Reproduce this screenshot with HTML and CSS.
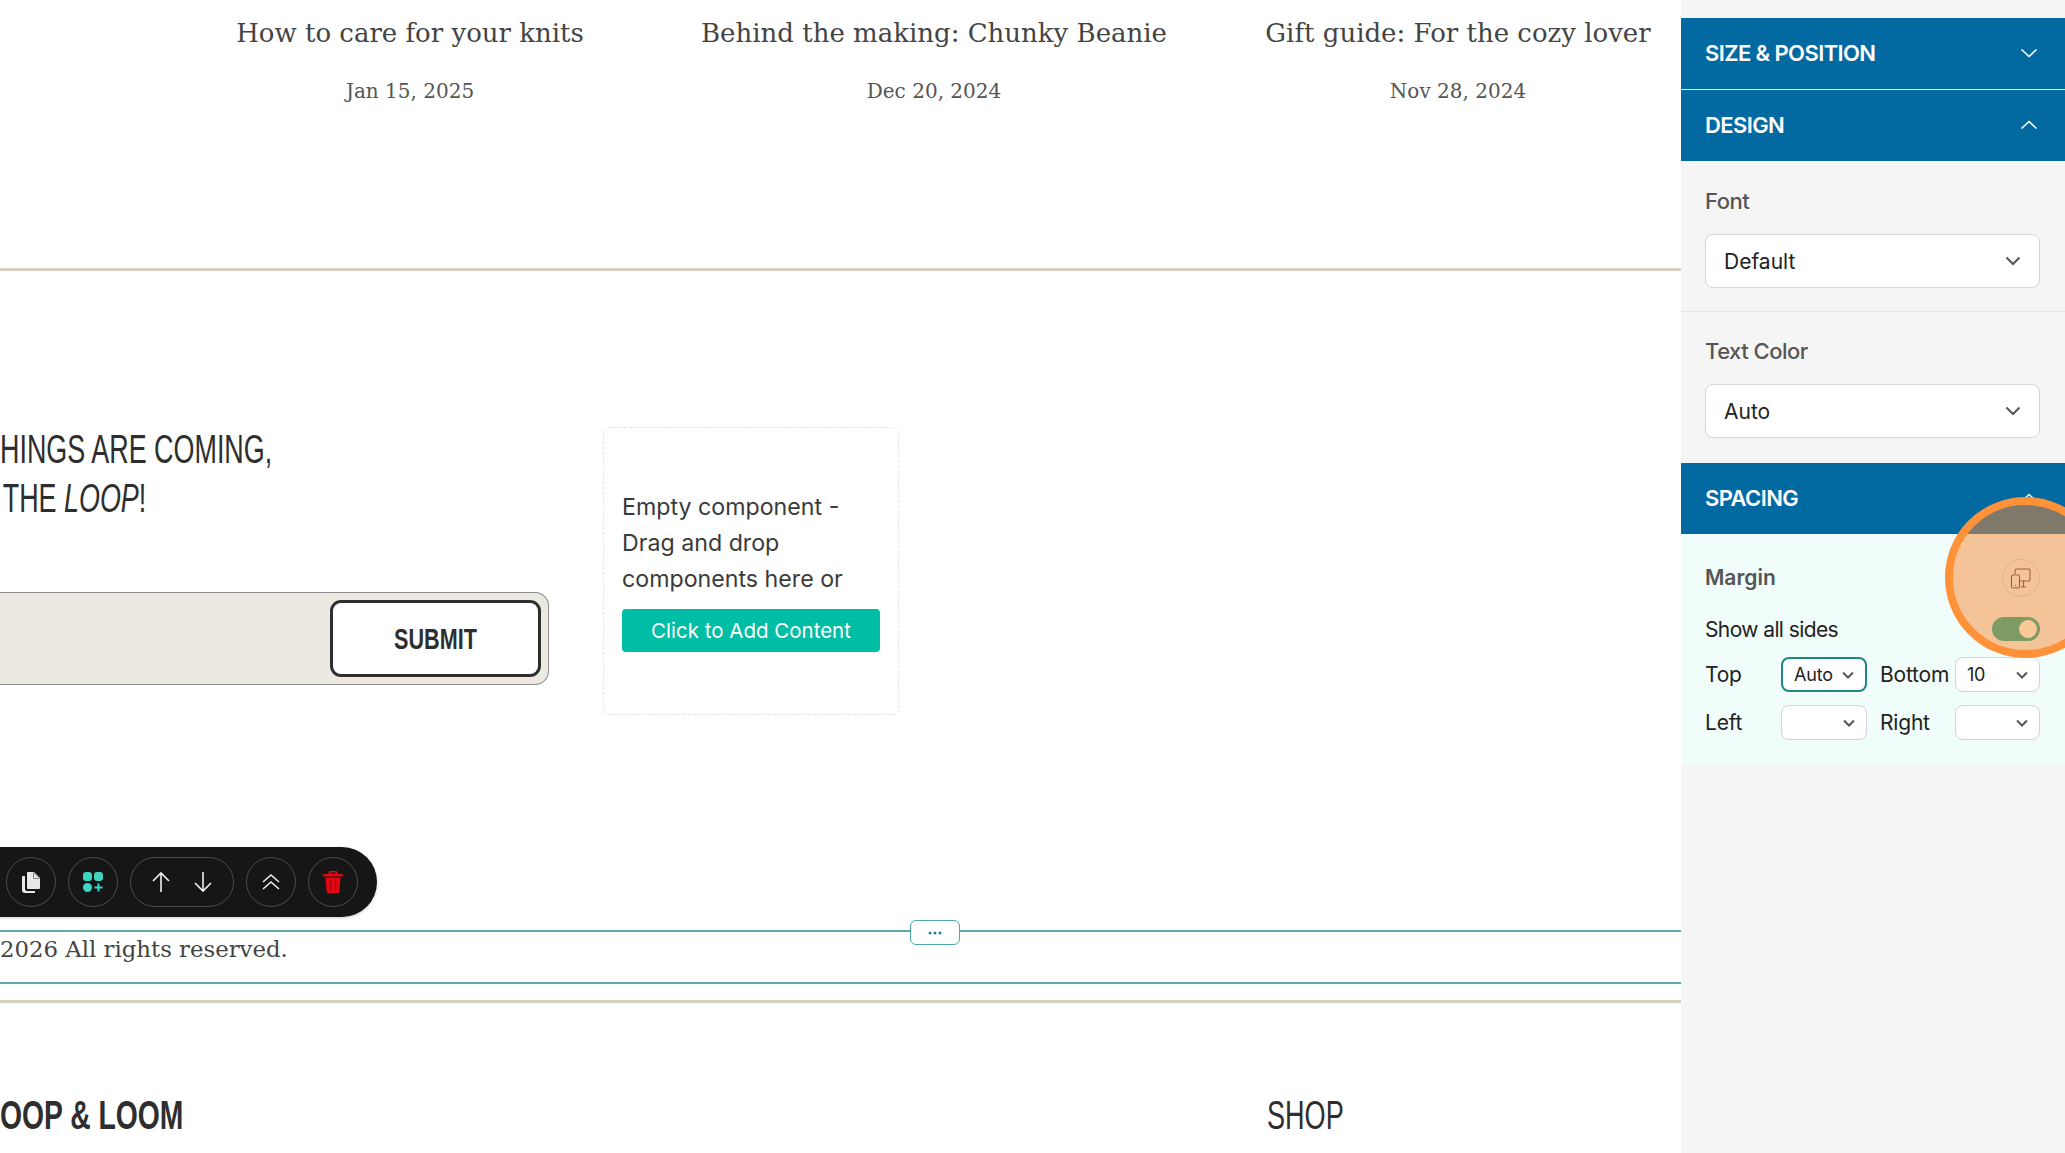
FILE: index.html
```html
<!DOCTYPE html>
<html lang="en">
<head>
<meta charset="utf-8">
<title>Page editor</title>
<link rel="stylesheet" href="styles.css">
</head>
<body>
<div class="app">
  <main class="canvas">
    <section class="posts">
      <article class="post"><h3>How to care for your knits</h3><p>Jan 15, 2025</p></article>
      <article class="post"><h3>Behind the making: Chunky Beanie</h3><p>Dec 20, 2024</p></article>
      <article class="post"><h3>Gift guide: For the cozy lover</h3><p>Nov 28, 2024</p></article>
    </section>
    <section class="signup">
      <div class="signup-main">
        <h2 class="signup-title">HINGS ARE COMING,<br><span class="indent">THE <em>LOOP</em>!</span></h2>
        <form class="signup-form"><button type="button" class="submit"><span>SUBMIT</span></button></form>
      </div>
      <div class="empty">
        <p>Empty component - Drag and drop components here or</p>
        <button type="button" class="add">Click to Add Content</button>
      </div>
    </section>
    <section class="legal">
      <div class="toolbar">
        <span class="tool"><svg width="24" height="24" viewBox="0 0 24 24"><path fill="#e8e8ea" d="M9 2h6l6 6v10a1 1 0 0 1-1 1H9a1 1 0 0 1-1-1V3a1 1 0 0 1 1-1z"/><path fill="#161616" d="M14.500 2.500v6h6z"/><path fill="#e8e8ea" d="M15 3l5 5h-5z"/><path fill="#e8e8ea" d="M6 6v13a2 2 0 0 0 2 2h8v2H6a3 3 0 0 1-3-3V7a1 1 0 0 1 1-1z"/></svg></span>
        <span class="tool"><svg width="22" height="22" viewBox="0 0 22 22"><rect x="1" y="1" width="9" height="9" rx="3.200" fill="#3dd6c3"/><rect x="12" y="1" width="9" height="9" rx="3.200" fill="#3dd6c3"/><rect x="1" y="12" width="9" height="9" rx="4.500" fill="#3dd6c3"/><path d="M16.500 12.500v8M12.500 16.500h8" stroke="#3dd6c3" stroke-width="2"/></svg></span>
        <span class="tool tool-pill">
          <svg width="20" height="22" viewBox="0 0 20 22"><path d="M10 21V2M2 10l8-8 8 8" fill="none" stroke="#f0f0f0" stroke-width="1.600"/></svg>
          <svg width="20" height="22" viewBox="0 0 20 22"><path d="M10 1v19M2 12l8 8 8-8" fill="none" stroke="#f0f0f0" stroke-width="1.600"/></svg>
        </span>
        <span class="tool"><svg width="20" height="20" viewBox="0 0 20 20"><path d="M2 10l8-7 8 7M2 17l8-7 8 7" fill="none" stroke="#f0f0f0" stroke-width="1.500"/></svg></span>
        <span class="tool"><svg width="20" height="24" viewBox="0 0 20 24"><path fill="#e30613" d="M7 1h6a1.500 1.500 0 0 1 1.500 1.500V4H19a1 1 0 0 1 0 2.500H1A1 1 0 0 1 1 4h4.500V2.500A1.500 1.500 0 0 1 7 1zm.5 1.500V4h5V2.500z"/><path fill="#e30613" d="M2.500 7.500h15l-1.100 14a2 2 0 0 1-2 1.800H5.600a2 2 0 0 1-2-1.800z"/><path stroke="#a80410" stroke-width="1.200" d="M7.500 10v10M12.500 10v10"/></svg></span>
      </div>
      <div class="legal-row">
        <button type="button" class="handle" aria-label="More">
          <svg width="14" height="4" viewBox="0 0 14 4"><circle cx="2" cy="2" r="1.500"/><circle cx="7" cy="2" r="1.500"/><circle cx="12" cy="2" r="1.500"/></svg>
        </button>
        <p class="copyright">2026 All rights reserved.</p>
      </div>
    </section>
    <footer class="foot">
      <h4 class="brand">OOP &amp; LOOM</h4>
      <h4 class="foot-shop">SHOP</h4>
    </footer>
  </main>
  <aside class="panel">
    <div class="accordion first"><span>SIZE &amp; POSITION</span><svg class="chev" width="18" height="10" viewBox="0 0 18 10"><path d="M1.500 1.500L9 8.500l7.500-7"/></svg></div>
    <div class="accordion"><span>DESIGN</span><svg class="chev" width="18" height="10" viewBox="0 0 18 10"><path d="M1.500 8.500L9 1.500l7.500 7"/></svg></div>
    <div class="field field-line">
      <label>Font</label>
      <div class="select"><span>Default</span><svg class="caret" width="16" height="10" viewBox="0 0 16 10"><path d="M1.500 1.500L8 8l6.500-6.500"/></svg></div>
    </div>
    <div class="field field-color">
      <label>Text Color</label>
      <div class="select"><span>Auto</span><svg class="caret" width="16" height="10" viewBox="0 0 16 10"><path d="M1.500 1.500L8 8l6.500-6.500"/></svg></div>
    </div>
    <div class="accordion spacing-head"><span>SPACING</span><svg class="chev" width="18" height="10" viewBox="0 0 18 10"><path d="M1.500 8.500L9 1.500l7.500 7"/></svg></div>
    <div class="spacing">
      <div class="spacing-row">
        <label>Margin</label>
        <span class="device"><svg width="22" height="22" viewBox="0 0 22 22"><path d="M5 7V3.500A1.500 1.500 0 0 1 6.500 2h12A1.500 1.500 0 0 1 20 3.500v9a1.500 1.500 0 0 1-1.500 1.500H10M11 20h5M13.500 14.500V20" fill="none" stroke="#a0623a" stroke-width="1.100"/><rect x="1.500" y="8" width="8" height="13" rx="1.500" fill="none" stroke="#a0623a" stroke-width="1.100"/><circle cx="5.500" cy="18.500" r=".7" fill="#a0623a"/></svg></span>
      </div>
      <div class="spacing-row show">
        <span>Show all sides</span>
        <span class="toggle"><i></i></span>
      </div>
      <div class="sides">
        <span>Top</span><div class="mini active"><b>Auto</b><svg class="caret" width="12" height="8" viewBox="0 0 12 8"><path d="M1 1.500l5 5 5-5"/></svg></div>
        <span class="side-right">Bottom</span><div class="mini"><b>10</b><svg class="caret" width="12" height="8" viewBox="0 0 12 8"><path d="M1 1.500l5 5 5-5"/></svg></div>
        <span>Left</span><div class="mini"><b></b><svg class="caret" width="12" height="8" viewBox="0 0 12 8"><path d="M1 1.500l5 5 5-5"/></svg></div>
        <span class="side-right">Right</span><div class="mini"><b></b><svg class="caret" width="12" height="8" viewBox="0 0 12 8"><path d="M1 1.500l5 5 5-5"/></svg></div>
      </div>
    </div>
    <div class="spotlight"></div>
  </aside>
</div>
</body>
</html>
```
FILE: styles.css
```css
* { box-sizing: border-box; }
html, body { margin: 0; height: 100%; overflow: hidden; background: #fff; }
body { font-family: "Inter", "Noto Sans", sans-serif; }
.app { display: flex; width: 2065px; height: 1153px; overflow: hidden; }

.canvas { width: 1681px; flex: none; height: 1153px; overflow: hidden; position: relative; background: #fff; color: #2e2e2e; }

.posts { display: grid; grid-template-columns: repeat(3, 524px); padding: 17px 0 0 148px; height: 271px; border-bottom: 3px solid #d5d2bf; font-family: "DejaVu Serif", serif; text-align: center; }
.post { white-space: nowrap; }
.post h3 { margin: 0; font-size: 26px; line-height: 32px; font-weight: 400; color: #444; }
.post p { margin: 30px 0 0; font-size: 20px; line-height: 24px; color: #555; }

.signup { display: flex; height: 659px; align-items: flex-start; position: relative; }
.signup-main { width: 549px; flex: none; }
.signup-title { margin: 154px 0 0; font-family: "Liberation Sans", sans-serif; font-weight: 400; font-size: 40px; line-height: 49px; color: #2e2e2e; white-space: nowrap; transform: scaleX(.673); transform-origin: left top; }
.indent { margin-left: 4px; }
.signup-form { display: flex; justify-content: flex-end; align-items: center; height: 93px; margin: 69px 0 0; padding-right: 7px; background: #ece8e2; border: 1px solid #8c8c8c; border-left: 0; border-radius: 0 14px 14px 0; }
.submit { width: 211px; height: 77px; background: #fff; border: 3px solid #2e2e2e; border-radius: 11px; font-family: "Liberation Sans", sans-serif; font-weight: 700; font-size: 30px; color: #2e2e2e; padding: 0; }
.submit span { display: inline-block; transform: scaleX(.72); }
.empty { width: 296px; height: 288px; margin: 156px 0 0 54px; padding: 61px 18px 0; border: 1px dashed #e6e6e6; border-radius: 6px; }
.empty p { margin: 0; font-size: 23.2px; line-height: 36px; color: #3a3a3a; }
.add { display: block; width: 258px; height: 43px; margin-top: 12px; padding: 0; border: 0; border-radius: 4px; background: #00bda5; color: #fff; font: 400 20.5px "Inter", sans-serif; }

.legal { position: absolute; left: 0; right: 0; top: 847px; }
.toolbar { position: absolute; left: -40px; top: 0; height: 70px; width: 417px; background: #161616; border-radius: 35px; display: flex; align-items: center; gap: 12px; padding-left: 46px; box-shadow: 0 1px 3px rgba(0,0,0,.2); }
.tool { width: 50px; height: 50px; border: 1px solid #4b4b4b; border-radius: 25px; display: flex; align-items: center; justify-content: center; flex: none; }
.tool-pill { width: 104px; gap: 22px; }
.legal-row { position: absolute; left: 0; right: 0; top: 83px; height: 54px; border-top: 2px solid #5faab0; border-bottom: 2px solid #5faab0; }
.copyright { margin: 1px 0 0; font-family: "DejaVu Serif", serif; font-size: 22.8px; line-height: 32px; color: #444; white-space: nowrap; }
.handle { position: absolute; left: 910px; top: -12px; width: 50px; height: 25px; padding: 0; background: #fff; border: 1px solid #4da6ad; border-radius: 6px; display: flex; align-items: center; justify-content: center; fill: #2c7f9a; }

.foot { position: absolute; left: 0; right: 0; top: 1000px; height: 153px; border-top: 3px solid #d5d2bf; font-family: "Liberation Sans", sans-serif; }
.foot h4 { margin: 0; font-size: 41px; line-height: 48px; position: absolute; top: 88px; color: #2e2e2e; white-space: nowrap; transform-origin: left top; }
.brand { left: 0; font-weight: 700; transform: scaleX(.69); }
.foot-shop { left: 1267px; font-weight: 400; transform: scaleX(.66); }

.panel { width: 384px; flex: none; height: 1153px; position: relative; overflow: hidden; background: #f5f5f5; color: #222; font-size: 21px; }
.accordion { height: 71px; background: #0369a1; color: #fff; font-weight: 600; font-size: 22px; letter-spacing: -.6px; display: flex; align-items: center; justify-content: space-between; padding: 0 27px 2px 24px; }
.accordion.first { margin-top: 18px; height: 72px; border-bottom: 1px solid #e8f1f6; }
.chev path { fill: none; stroke: #fff; stroke-width: 1.600; }
.caret path { fill: none; stroke: #555; stroke-width: 2; }
.field { padding: 25px 25px 25px 24px; }
.field-line { border-bottom: 1px solid #e6e6e6; height: 151px; }
.field-color { height: 151px; padding-top: 24px; }
.field label { display: block; font-size: 22px; line-height: 30px; font-weight: 500; color: #555; letter-spacing: -.5px; margin-bottom: 18px; }
.select { height: 54px; background: #fff; border: 1px solid #d4d4d8; border-radius: 8px; display: flex; align-items: center; justify-content: space-between; padding: 0 18px; font-size: 21px; color: #222; }
.spacing { background: #f0fdfa; height: 232px; padding: 27px 25px 0 24px; }
.spacing-row { display: flex; justify-content: space-between; align-items: center; }
.spacing-row label { font-size: 21px; font-weight: 600; color: #555; line-height: 34px; }
.show { margin-top: 19px; height: 30px; font-size: 21px; letter-spacing: -.6px; }
.device { position: relative; z-index: 1; width: 38px; height: 38px; border: 1px solid #e0b48e; border-radius: 50%; display: flex; align-items: center; justify-content: center; margin: -2px 0; }
.toggle { position: relative; z-index: 1; width: 48px; height: 24px; border-radius: 12px; background: #7e9b63; display: flex; justify-content: flex-end; align-items: center; padding-right: 3px; }
.toggle i { width: 18px; height: 18px; border-radius: 50%; background: #fbc998; }
.sides { display: grid; grid-template-columns: 76px 86px 88px 85px; grid-auto-rows: 35px; row-gap: 13px; align-items: center; margin-top: 13px; font-size: 21px; letter-spacing: -.2px; }
.side-right { padding-left: 13px; }
.mini { height: 35px; background: #fff; border: 1px solid #d4d4d8; border-radius: 8px; display: flex; align-items: center; justify-content: space-between; padding: 0 11px; }
.mini b { font-weight: 400; font-size: 18px; color: #222; }
.mini.active { border: 2.5px solid #1c8a80; }
.spotlight { position: absolute; left: 264px; top: 497px; width: 161px; height: 161px; border-radius: 50%; border: 8px solid #ff9138; background: rgba(250,138,54,.5); }
```
